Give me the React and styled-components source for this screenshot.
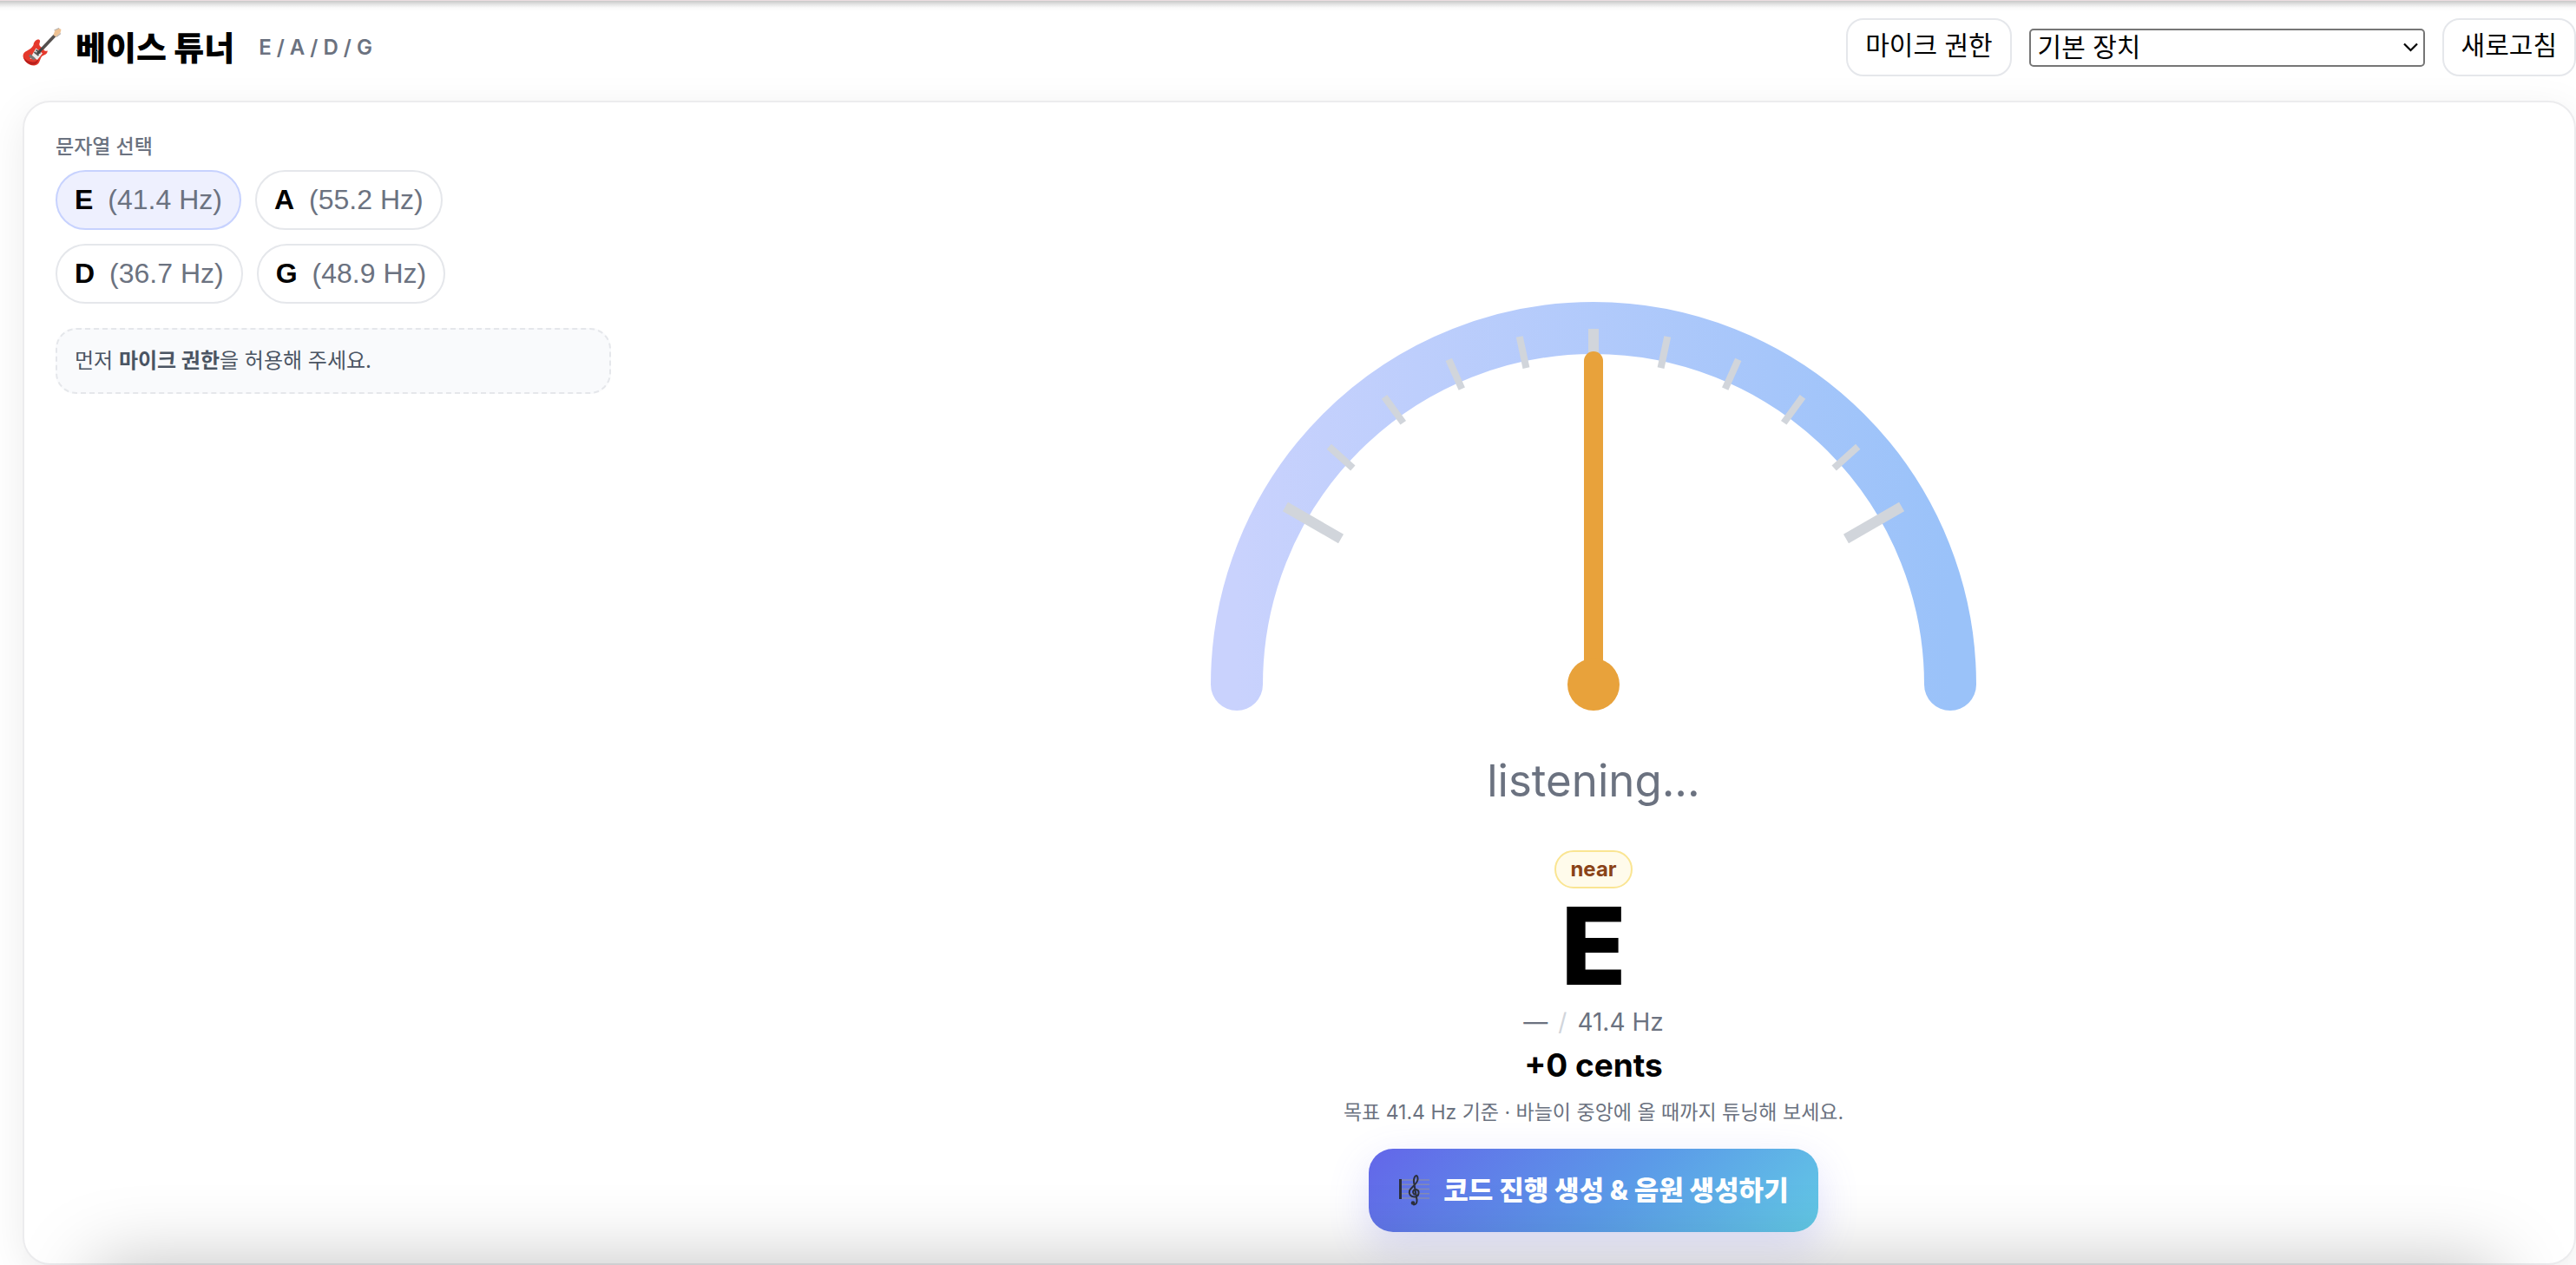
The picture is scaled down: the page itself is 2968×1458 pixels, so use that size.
import React, { useState } from "react";
import styled, { createGlobalStyle } from "styled-components";

const GlobalStyle = createGlobalStyle`
  *, *::before, *::after { box-sizing: border-box; }
  body {
    margin: 0;
    background: #fff;
    color: #000;
    font-family: Inter, "Noto Sans CJK KR", sans-serif;
  }
`;

const Page = styled.div`
  display: flex;
  flex-direction: column;
  min-height: 100vh;
  padding-left: 26px;
  overflow: hidden;
  background: linear-gradient(#c8c8c8, #e4e4e4 4px, #fafafa 8px, #fff 12px);
  border-top: 1px solid #ecdde1;
`;

const Header = styled.header`
  display: flex;
  align-items: center;
  justify-content: space-between;
  padding: 20px 0 28px;
`;

const Brand = styled.div`
  display: flex;
  align-items: center;
  gap: 16px;
`;

const Title = styled.h1`
  margin: 0;
  font-size: 38px;
  line-height: 48px;
  font-weight: 800;
`;

const Tuning = styled.span`
  margin-left: 12px;
  font-size: 24px;
  line-height: 32px;
  font-weight: 600;
  color: #6b7280;
`;

const Controls = styled.div`
  display: flex;
  align-items: center;
  gap: 20px;
`;

const Button = styled.button`
  height: 67px;
  padding: 0 20px 4px;
  border: 2px solid #e5e7eb;
  border-radius: 20px;
  background: #fff;
  color: #000;
  font: 400 30px/36px "Liberation Sans", "Noto Sans CJK KR", sans-serif;
`;

const SelectBox = styled.div`
  display: grid;
  align-items: center;
  width: 456px;
  & > * { grid-area: 1 / 1; }
  svg { justify-self: end; margin-right: 8px; pointer-events: none; }
`;

const Select = styled.select`
  appearance: none;
  width: 100%;
  height: 44px;
  padding: 0 8px;
  border: 2px solid #767676;
  border-radius: 5px;
  background: #fff;
  color: #000;
  font: 400 30px/36px "Liberation Sans", "Noto Sans CJK KR", sans-serif;
`;

const Panel = styled.main`
  flex: 1;
  display: grid;
  grid-template-columns: 640px 1fr;
  gap: 38px;
  padding: 36px;
  border: 2px solid #ececee;
  border-radius: 32px;
  background: #fff;
  box-shadow: 0 12px 48px rgba(0, 0, 0, 0.08);
`;

const Side = styled.section`
  display: flex;
  flex-direction: column;
`;

const SideTitle = styled.h2`
  margin: 0 0 12px;
  font-size: 23px;
  line-height: 30px;
  font-weight: 500;
  color: #6b7280;
`;

const Chips = styled.div`
  display: flex;
  flex-wrap: wrap;
  gap: 16px;
  width: 480px;
`;

const Chip = styled.button`
  display: flex;
  gap: 17px;
  padding: 14px 20px;
  border: 2px solid ${(p) => (p.$active ? "#c7d2fe" : "#e5e7eb")};
  border-radius: 35px;
  background: ${(p) => (p.$active ? "#eef0fe" : "#fff")};
  color: #6b7280;
  font: 400 32px/37px "Liberation Sans", sans-serif;
  strong { color: #000; }
`;

const Notice = styled.p`
  margin: 28px 0 0;
  padding: 20px;
  border: 2px dashed #e5e7eb;
  border-radius: 24px;
  background: #f9fafc;
  color: #4b5563;
  font-size: 24px;
  line-height: 32px;
`;

const Tuner = styled.section`
  display: flex;
  flex-direction: column;
  align-items: center;
`;

const Gauge = styled.svg`
  width: 100%;
  max-width: 1000px;
  margin-bottom: 10px;
`;

const Listening = styled.div`
  font-size: 51px;
  line-height: 72px;
  color: #6b7280;
`;

const Badge = styled.span`
  margin-top: 44px;
  padding: 4px 16px;
  border: 2px solid #fae592;
  border-radius: 22px;
  background: #fffbeb;
  color: #8a4318;
  font-size: 24px;
  line-height: 32px;
  font-weight: 700;
`;

const Note = styled.div`
  margin-top: -8px;
  font-size: 124px;
  line-height: 148px;
  font-weight: 800;
`;

const Reading = styled.div`
  display: flex;
  gap: 12px;
  font-size: 28px;
  line-height: 28px;
  color: #6b7280;
  i { color: #d1d5db; font-style: normal; }
`;

const Cents = styled.div`
  margin: 12px 0 6px;
  font-size: 37px;
  line-height: 48px;
  font-weight: 700;
`;

const Hint = styled.p`
  margin: 8px 0 26px;
  font-size: 23px;
  line-height: 32px;
  color: #6b7280;
`;

const Cta = styled.button`
  display: flex;
  align-items: center;
  gap: 16px;
  height: 96px;
  padding: 0 34px;
  border: 0;
  border-radius: 28px;
  background: linear-gradient(135deg, #6366e9, #5b9ae8 55%, #62c9e5);
  box-shadow: 0 16px 48px rgba(99, 102, 241, 0.2);
  color: #fff;
  font: 800 31px/40px Inter, "Noto Sans CJK KR", sans-serif;
`;

const BottomShade = styled.div`
  position: fixed;
  z-index: 2;
  top: 100%;
  left: 108px;
  right: 92px;
  height: 140px;
  box-shadow: 0 0 88px rgba(0, 0, 0, 0.25);
  pointer-events: none;
`;

const GuitarIcon = () => (
  <svg width="45" height="46" viewBox="0 0 45 46" aria-hidden="true">
    <path d="M20 27 38 8" stroke="#55504e" strokeWidth="3.6" />
    <path d="M35.500 8.500 37.500 2.500 42 0.500 44.500 2 43.500 6 38.500 10.500Z" fill="#eec294" />
    <path d="M36.500 3 42 .5M39 10.500l5-4" stroke="#b9b3ad" strokeWidth="1.200" />
    <path d="M12.500 20C13 15.500 17 12.500 19.500 14c2 1.500-1.500 4.500.5 7l5.500 5.500c2 1 4-1.500 3 1.500-1 3.500-5 3-7 6-2 3.500-2 9-8 9.500C7 44 .5 37 .5 32.500.5 26 9 27 12.500 20Z" fill="#e5392c" />
    <path d="M1 34c1.500 5.500 7 9.500 12.500 8.500 4-.8 4.500-5 6-8.500-1.500 3-4 6-8 5.500C7 39 3 37 1 34Z" fill="#b81f1c" />
    <path d="M15.500 23.500 23 29.500 17 37 13 34.500 8.500 36 12 29.500Z" fill="#eceaea" />
    <path d="m13.500 28 5 4M15.500 25.500l5 4" stroke="#555" strokeWidth="1.800" />
    <path d="m8 31.500 6 5" stroke="#777" strokeWidth="3" />
    <path d="m17 30 6-6.500" stroke="#444" strokeWidth="3" />
  </svg>
);

const ScoreIcon = () => (
  <svg width="36" height="38" viewBox="0 0 36 38" fill="none" aria-hidden="true">
    <path d="M3 7h33M3 12.200h33M3 17.500h33M3 22.700h33M3 28h33" stroke="#838ab4" strokeWidth="1.400" />
    <path d="M2.500 6v23" stroke="#2c2f3b" strokeWidth="3" />
    <path
      d="M18.500 23.500C15.500 20.500 18 17.500 20.500 18c4.500.8 4 8-1.500 8.500-5 .3-7-3.500-6-7 1.200-4 9-7.500 9.500-13 .2-2.500-.5-4.500-1.700-4.500-2 .3-3.200 4-2.800 7.500L21.500 30c.3 3-.8 5.500-3.500 5.500"
      stroke="#2c2f3b"
      strokeWidth="2"
      strokeLinecap="round"
    />
    <circle cx="17" cy="33.500" r="2.300" fill="#2c2f3b" />
  </svg>
);

const STRINGS = [
  { name: "E", hz: "41.4" },
  { name: "A", hz: "55.2" },
  { name: "D", hz: "36.7" },
  { name: "G", hz: "48.9" },
];

const TICKS = [-60, -48, -36, -24, -12, 0, 12, 24, 36, 48, 60];

const Dial = () => (
  <Gauge viewBox="0 0 1000 700" role="img" aria-label="tuner dial">
    <defs>
      <linearGradient id="arc" x1="0" x2="1" y1="0" y2="0">
        <stop offset="0" stopColor="#c9d2fd" />
        <stop offset="1" stopColor="#9ac2f9" />
      </linearGradient>
    </defs>
    <path d="M89 635a411 411 0 0 1 822 0" fill="none" stroke="url(#arc)" strokeWidth="60" strokeLinecap="round" />
    {TICKS.map((a) => {
      const major = a % 60 === 0;
      return (
        <path
          key={a}
          d={major ? "M500 225v74" : "M500 225v37"}
          stroke="#d1d5db"
          strokeWidth={major ? 12 : 8}
          transform={`rotate(${a} 500 635)`}
        />
      );
    })}
    <path d="M500 635V262" stroke="#e8a23b" strokeWidth="22" strokeLinecap="round" />
    <circle cx="500" cy="635" r="30" fill="#e8a23b" />
  </Gauge>
);

export default function App() {
  const [active, setActive] = useState("E");
  const target = STRINGS.find((s) => s.name === active);
  return (
    <>
      <GlobalStyle />
      <Page>
        <Header>
          <Brand>
            <GuitarIcon />
            <Title>베이스 튜너</Title>
            <Tuning>E / A / D / G</Tuning>
          </Brand>
          <Controls>
            <Button type="button">마이크 권한</Button>
            <SelectBox>
              <Select aria-label="입력 장치">
                <option>기본 장치</option>
              </Select>
              <svg width="17" height="11" viewBox="0 0 17 11" fill="none" aria-hidden="true">
                <path d="m1 1.500 7.500 7.500L16 1.500" stroke="#000" strokeWidth="2.200" />
              </svg>
            </SelectBox>
            <Button type="button">새로고침</Button>
          </Controls>
        </Header>
        <Panel>
          <Side>
            <SideTitle>문자열 선택</SideTitle>
            <Chips>
              {STRINGS.map((s) => (
                <Chip key={s.name} type="button" $active={s.name === active} onClick={() => setActive(s.name)}>
                  <strong>{s.name}</strong>
                  <span>({s.hz} Hz)</span>
                </Chip>
              ))}
            </Chips>
            <Notice>
              먼저 <strong>마이크 권한</strong>을 허용해 주세요.
            </Notice>
          </Side>
          <Tuner>
            <Dial />
            <Listening>listening...</Listening>
            <Badge>near</Badge>
            <Note>{target.name}</Note>
            <Reading>
              <span>—</span>
              <i>/</i>
              <span>{target.hz} Hz</span>
            </Reading>
            <Cents>+0 cents</Cents>
            <Hint>목표 {target.hz} Hz 기준 · 바늘이 중앙에 올 때까지 튜닝해 보세요.</Hint>
            <Cta type="button">
              <ScoreIcon />
              코드 진행 생성 &amp; 음원 생성하기
            </Cta>
          </Tuner>
        </Panel>
      </Page>
      <BottomShade />
    </>
  );
}
